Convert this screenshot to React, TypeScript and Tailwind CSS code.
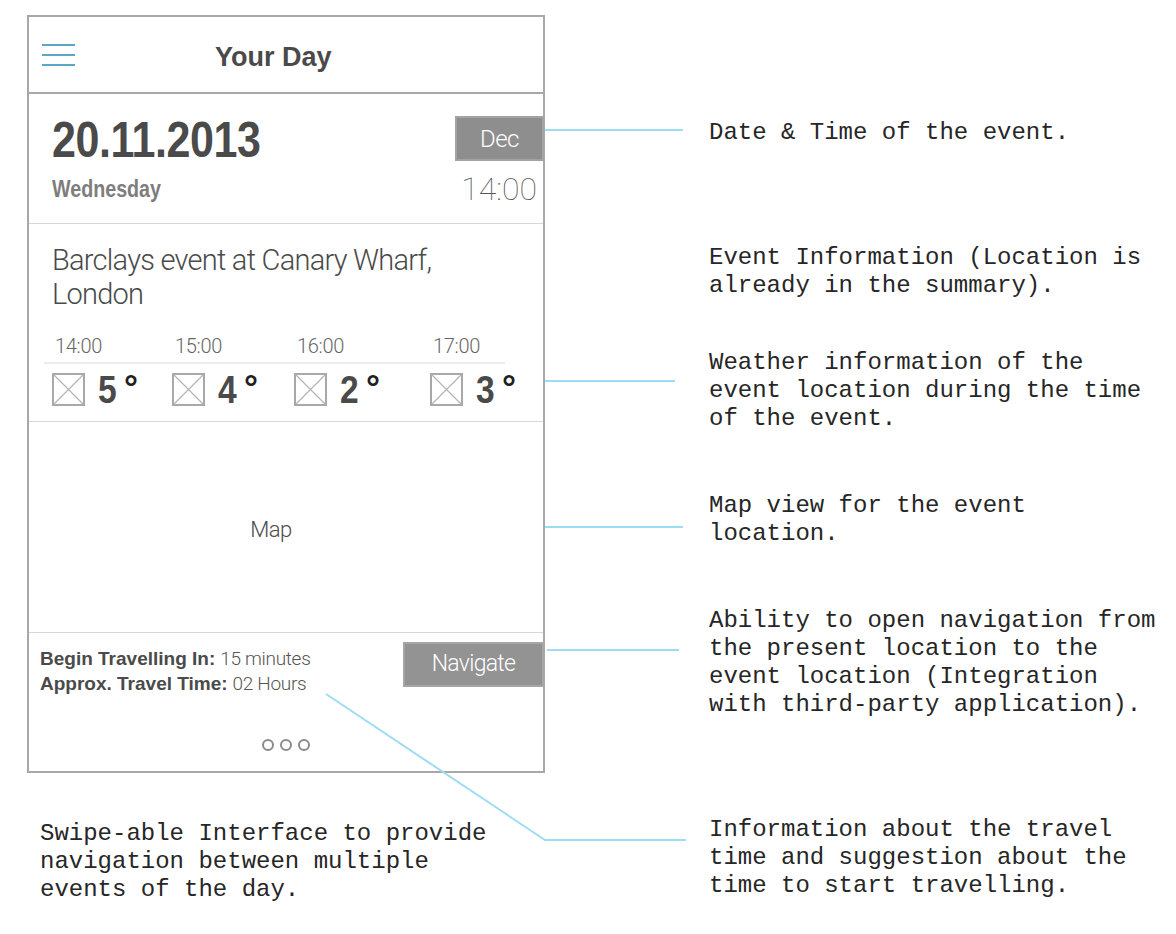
import React from 'react';

const light = { fontFamily: 'Roboto, "Liberation Sans", sans-serif' };
const sans = { fontFamily: '"Liberation Sans", Arial, sans-serif' };
const mono = { fontFamily: '"Liberation Mono", "Courier New", monospace' };

const forecast = [
  { time: '14:00', temp: '5' },
  { time: '15:00', temp: '4' },
  { time: '16:00', temp: '2' },
  { time: '17:00', temp: '3' },
];

const Placeholder = () => (
  <svg width="33" height="33" viewBox="0 0 33 33" className="shrink-0">
    <rect x="1" y="1" width="31" height="31" fill="none" stroke="#a9a9a9" strokeWidth="2" />
    <path d="M2 2 L31 31 M31 2 L2 31" stroke="#b5b5b5" strokeWidth="1.2" />
  </svg>
);

const Note = ({ children, className = '' }: { children: string; className?: string }) => (
  <div className={`whitespace-pre text-[24px] leading-[28px] text-[#262626] ${className}`} style={mono}>
    {children}
  </div>
);

const Phone = () => {
  return (
    <div className="w-[518px] h-[758px] border-2 border-[#a8a8a8] flex flex-col bg-white text-[#4a4a4a]">
      {/* header */}
      <div className="h-[77px] border-b-2 border-[#a8a8a8] flex items-center pl-[13px] shrink-0">
        <div className="flex flex-col gap-[8px]">
          <div className="w-[33px] h-[2px] bg-[#5aa6c6]" />
          <div className="w-[33px] h-[2px] bg-[#5aa6c6]" />
          <div className="w-[33px] h-[2px] bg-[#5aa6c6]" />
        </div>
        <div className="ml-[140px] pt-[6px] text-[27px] font-bold text-[#4a4a4a]" style={sans}>
          Your Day
        </div>
      </div>

      {/* date and time */}
      <div className="h-[130px] border-b border-[#d6d6d6] flex justify-between shrink-0">
        <div className="pl-[23px] pt-[21px]" style={sans}>
          <div className="text-[50px] leading-none font-bold text-[#4a4a4a] tracking-[-0.5px] origin-left scale-x-[0.86] whitespace-nowrap">
            20.11.2013
          </div>
          <div className="mt-[12px] text-[24px] leading-none font-bold text-[#7d7d7d] origin-left scale-x-[0.82] whitespace-nowrap">
            Wednesday
          </div>
        </div>
        <div className="flex flex-col items-end pt-[22px]">
          <div className="w-[89px] h-[45px] -mr-[1px] bg-[#8e8e8e] border-2 border-[#a3a3a3] flex items-center justify-center text-white text-[24px] font-light tracking-[-0.5px]" style={light}>
            Dec
          </div>
          <div className="mt-[12px] mr-[6px] text-[32px] leading-none font-thin text-[#555]" style={light}>
            14:00
          </div>
        </div>
      </div>

      {/* event + weather */}
      <div className="h-[198px] border-b border-[#d6d6d6] pt-[19px] shrink-0">
        <div className="pl-[23px] text-[29px] leading-[34px] font-light text-[#4a4a4a] tracking-[-0.75px]" style={light}>
          Barclays event at Canary Wharf,
          <br />
          London
        </div>
        <div className="ml-[15px] w-[461px] mt-[23px] pl-[11px] pb-[4px] border-b-2 border-[#ececec] grid grid-cols-[120px_122px_136px_1fr] text-[20px] leading-[24px] font-light text-[#666] tracking-[-0.3px]" style={light}>
          {forecast.map((f) => (
            <div key={f.time}>{f.time}</div>
          ))}
        </div>
        <div className="pl-[23px] mt-[6px] grid grid-cols-[120px_122px_136px_1fr]">
          {forecast.map((f) => (
            <div key={f.time} className="flex items-center">
              <Placeholder />
              <div className="ml-[13px] flex items-start font-bold" style={sans}>
                <span className="inline-block w-[19px] text-[39px] leading-none text-[#4a4a4a] origin-left scale-x-[0.86]">
                  {f.temp}
                </span>
                <span className="ml-[7px] text-[35px] leading-none text-[#1f1f1f]">°</span>
              </div>
            </div>
          ))}
        </div>
      </div>

      {/* map */}
      <div className="h-[211px] border-b border-[#d6d6d6] flex items-center justify-center pr-[30px] pt-[5px] shrink-0">
        <span className="text-[22px] font-light text-[#4a4a4a] tracking-[-0.5px]" style={light}>
          Map
        </span>
      </div>

      {/* travel */}
      <div className="flex-1 flex flex-col">
        <div className="flex justify-between">
          <div className="pl-[11px] pt-[13px] text-[19px] leading-[24px] text-[#4a4a4a]">
            <div>
              <span className="font-bold" style={sans}>Begin Travelling In:</span>{' '}
              <span className="font-light text-[#555] tracking-[-0.3px]" style={light}>15 minutes</span>
            </div>
            <div>
              <span className="font-bold" style={sans}>Approx. Travel Time:</span>{' '}
              <span className="font-light text-[#555] tracking-[-0.3px]" style={light}>02 Hours</span>
            </div>
          </div>
          <div className="mt-[9px] -mr-[1px] w-[141px] h-[45px] bg-[#939393] border-2 border-[#a6a6a6] flex items-center justify-center text-white text-[23px] font-light tracking-[-0.7px]" style={light}>
            Navigate
          </div>
        </div>
        <div className="mt-auto pb-[20px] flex justify-center gap-[6px]">
          <div className="w-[12px] h-[12px] rounded-full border-2 border-[#8a8a8a]" />
          <div className="w-[12px] h-[12px] rounded-full border-2 border-[#8a8a8a]" />
          <div className="w-[12px] h-[12px] rounded-full border-2 border-[#8a8a8a]" />
        </div>
      </div>
    </div>
  );
};

export default function App() {
  return (
    <div className="relative w-[1176px] h-[934px] bg-white overflow-hidden">
      <div className="flex">
        <div className="ml-[27px] mt-[15px]">
          <Phone />
        </div>
        <div className="ml-[164px] flex flex-col">
          <Note className="mt-[119px]">Date &amp; Time of the event.</Note>
          <Note className="mt-[97px]">{'Event Information (Location is\nalready in the summary).'}</Note>
          <Note className="mt-[49px]">{'Weather information of the\nevent location during the time\nof the event.'}</Note>
          <Note className="mt-[59px]">{'Map view for the event\nlocation.'}</Note>
          <Note className="mt-[59px]">{'Ability to open navigation from\nthe present location to the\nevent location (Integration\nwith third-party application).'}</Note>
        </div>
      </div>

      <div className="flex mt-[43px]">
        <div className="w-[709px] pl-[40px] pt-[4px]">
          <Note>{'Swipe-able Interface to provide\nnavigation between multiple\nevents of the day.'}</Note>
        </div>
        <Note>{'Information about the travel\ntime and suggestion about the\ntime to start travelling.'}</Note>
      </div>

      {/* connector lines */}
      <svg className="absolute inset-0 pointer-events-none" width="1176" height="934">
        <g stroke="#9edcf4" strokeWidth="2" fill="none">
          <path d="M545 130 H683" />
          <path d="M545 381 H675" />
          <path d="M545 527 H683" />
          <path d="M547 650 H679" />
          <path d="M326 694 L545 840 H686" />
        </g>
      </svg>
    </div>
  );
}
